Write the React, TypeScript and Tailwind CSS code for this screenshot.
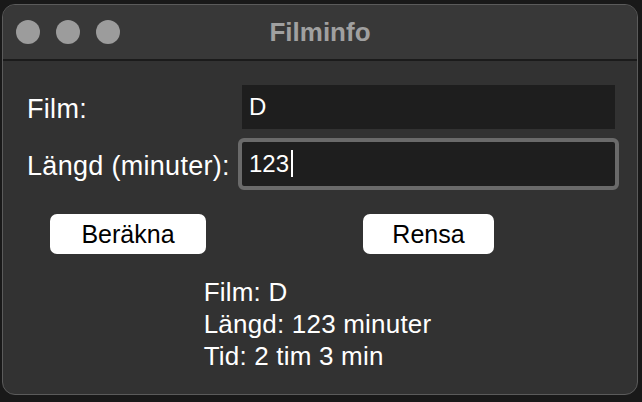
import React from 'react';

const font = { fontFamily: '"Liberation Sans", Arial, sans-serif' };

function TrafficLights() {
  return (
    <div className="flex items-center gap-[16px]">
      <span className="block w-[24px] h-[24px] rounded-full bg-[#9c9c9c]" />
      <span className="block w-[24px] h-[24px] rounded-full bg-[#9c9c9c]" />
      <span className="block w-[24px] h-[24px] rounded-full bg-[#9c9c9c]" />
    </div>
  );
}

function TitleBar() {
  return (
    <div className="grid grid-cols-[1fr_auto_1fr] items-center h-[56px] shrink-0 px-[13px] bg-[#383838] border-b-2 border-[#1b1b1b]">
      <TrafficLights />
      <div className="text-[26px] font-bold leading-none text-[#a0a0a0]">Filminfo</div>
      <div />
    </div>
  );
}

function Field({ value, focused }: { value: string; focused?: boolean }) {
  return (
    <div
      className={
        focused
          ? 'ml-[3px] w-[373px] h-[44px] flex items-center pl-[7px] bg-[#1e1e1e] rounded-[2px] outline-4 outline-[#6a6a6a] text-[24px] text-white leading-none'
          : 'ml-[3px] w-[373px] h-[44px] flex items-center pl-[7px] bg-[#1e1e1e] text-[24px] text-white leading-none'
      }
    >
      <span>{value}</span>
      {focused ? <span className="block ml-[2px] w-[2px] h-[27px] bg-white" /> : null}
    </div>
  );
}

function Button({ label, width }: { label: string; width: string }) {
  return (
    <button
      className={`${width} h-[40px] justify-self-center rounded-[7px] bg-white text-black text-[25px] leading-none`}
    >
      {label}
    </button>
  );
}

export default function App() {
  return (
    <div className="w-[642px] h-[402px] overflow-hidden bg-[#191919] pt-[4px] pl-[2px]" style={font}>
      <div className="w-[636px] h-[391px] flex flex-col overflow-hidden rounded-[13px] border border-[#5b5b5b] bg-[#323232]">
        <TitleBar />
        <div className="grid grid-cols-[222px_379px] pl-[14px] pt-[24px] text-white">
          <div className="flex items-center pl-[10px] pt-[4px] text-[27px] tracking-[0.3px]">Film:</div>
          <Field value="D" />

          <div className="flex items-center pl-[10px] pt-[4px] mt-[12px] text-[27px] tracking-[0.3px]">
            Längd (minuter):
          </div>
          <div className="mt-[12px]">
            <Field value="123" focused />
          </div>

          <div className="mt-[28px] grid">
            <Button label="Beräkna" width="w-[156px]" />
          </div>
          <div className="mt-[28px] grid">
            <Button label="Rensa" width="w-[131px]" />
          </div>

          <div className="col-span-2 justify-self-center mt-[22px] text-[26px] leading-[32px] tracking-[0.2px]">
            <div>Film: D</div>
            <div>Längd: 123 minuter</div>
            <div>Tid: 2 tim 3 min</div>
          </div>
        </div>
      </div>
    </div>
  );
}
